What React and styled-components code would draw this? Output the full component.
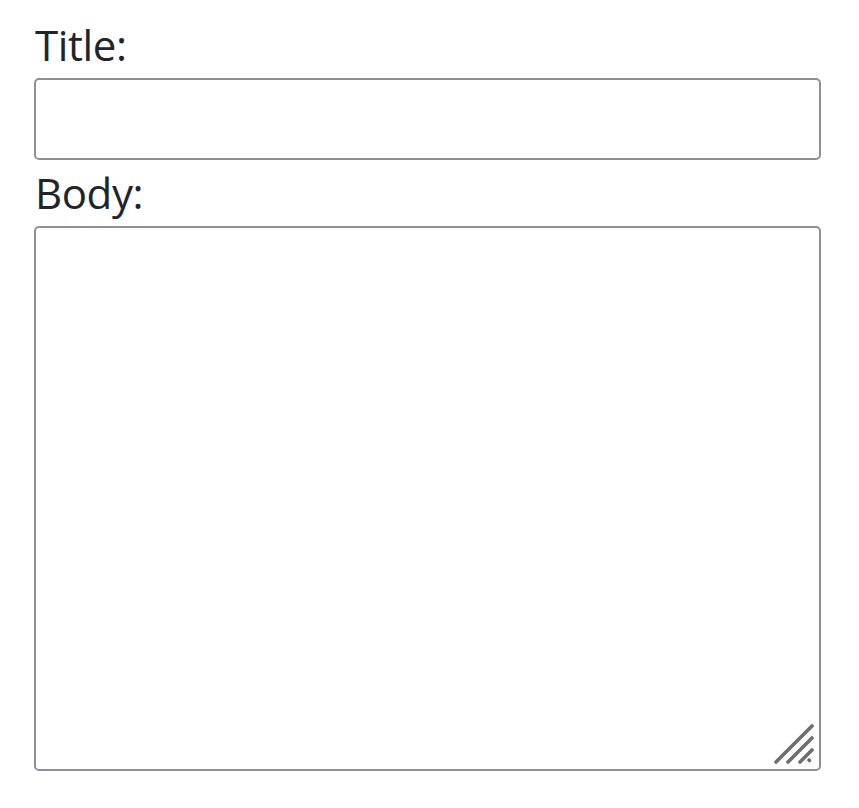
import React from "react";
import styled, { createGlobalStyle } from "styled-components";

const GlobalStyle = createGlobalStyle`
  body {
    margin: 0;
    background: #ffffff;
    font-family: "Open Sans", "Noto Sans", sans-serif;
  }
`;

const Form = styled.form`
  width: 787px;
  padding: 12px 0 0 34px;
  display: flex;
  flex-direction: column;
`;

const Label = styled.label`
  display: block;
  height: 66px;
  line-height: 66px;
  font-size: 42px;
  color: #212529;
  padding-left: 1px;
  letter-spacing: -0.4px;
`;

const Input = styled.input`
  box-sizing: border-box;
  width: 100%;
  height: 82px;
  border: 2px solid #8f8f98;
  border-radius: 5px;
  background: #fff;
  font: inherit;
  outline: none;
`;

const AreaWrap = styled.div`
  position: relative;
  width: 100%;
  height: 545px;
`;

const TextArea = styled.textarea`
  box-sizing: border-box;
  width: 100%;
  height: 100%;
  border: 2px solid #8f8f98;
  border-radius: 5px;
  background: #fff;
  resize: none;
  font: inherit;
  outline: none;
  display: block;
`;

const Grip = styled.svg`
  position: absolute;
  right: 6px;
  bottom: 6px;
  pointer-events: none;
`;

function ResizeGrip() {
  return (
    <Grip width="42" height="42" viewBox="0 0 42 42">
      <g stroke="#6e6e6e" strokeWidth="3.6" strokeLinecap="round">
        <line x1="39" y1="3" x2="3" y2="39" />
        <line x1="39" y1="15" x2="15" y2="39" />
        <line x1="39" y1="27" x2="27" y2="39" />
        <line x1="36" y1="37" x2="36.5" y2="37.5" />
      </g>
    </Grip>
  );
}

export default function App() {
  return (
    <>
      <GlobalStyle />
      <Form>
        <Label htmlFor="title">Title:</Label>
        <Input id="title" type="text" />
        <Label htmlFor="body">Body:</Label>
        <AreaWrap>
          <TextArea id="body" />
          <ResizeGrip />
        </AreaWrap>
      </Form>
    </>
  );
}
